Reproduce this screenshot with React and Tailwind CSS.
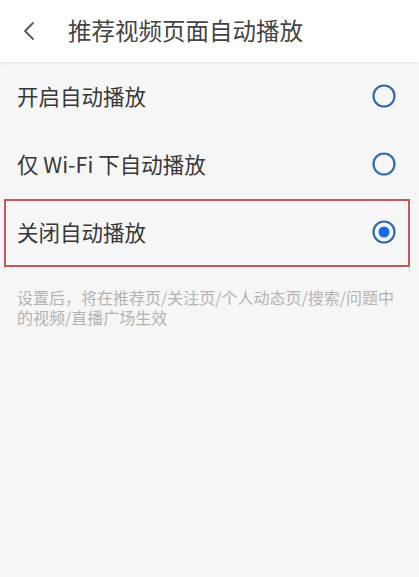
import React from "react";

function Radio({ checked }) {
  return (
    <svg width="26" height="26" viewBox="0 0 26 26">
      <circle cx="13" cy="13" r="10.5" fill="none" stroke="#2f6aad" strokeWidth="2.2" />
      {checked && <circle cx="13" cy="13" r="5.5" fill="#1668e3" />}
    </svg>
  );
}

function Row({ label, checked, highlight }) {
  return (
    <div className="relative flex h-[68px] items-center justify-between pl-[17px] pr-[22px]">
      <span className="text-[21.5px] leading-none text-[#383838]">{label}</span>
      <Radio checked={checked} />
      {highlight && (
        <div className="pointer-events-none absolute bottom-[-1px] left-[4px] right-[9px] top-[1px] border-[2.5px] border-[#c5585c]" />
      )}
    </div>
  );
}

export default function App() {
  return (
    <div
      className="flex h-[577px] w-[419px] flex-col overflow-hidden bg-[#f6f6f6]"
      style={{ fontFamily: '"Noto Sans CJK SC", "Noto Sans", sans-serif' }}
    >
      <div className="relative z-10 flex h-[62px] shrink-0 items-center bg-white shadow-[0_1px_3px_rgba(0,0,0,0.08)]">
        <svg width="16" height="22" viewBox="0 0 16 22" className="ml-[21px]">
          <path d="M12 3 L4 11 L12 19" fill="none" stroke="#555" strokeWidth="1.8" strokeLinecap="round" strokeLinejoin="round" />
        </svg>
        <span className="ml-[31px] text-[23.5px] leading-none text-[#444]">推荐视频页面自动播放</span>
      </div>
      <Row label="开启自动播放" />
      <Row label="仅 Wi-Fi 下自动播放" />
      <Row label="关闭自动播放" checked highlight />
      <p className="pl-[17px] pr-[14px] pt-[21px] text-[16px] leading-[20px] text-[#b3b3b3]">
        设置后，将在推荐页/关注页/个人动态页/搜索/问题中的视频/直播广场生效
      </p>
    </div>
  );
}
